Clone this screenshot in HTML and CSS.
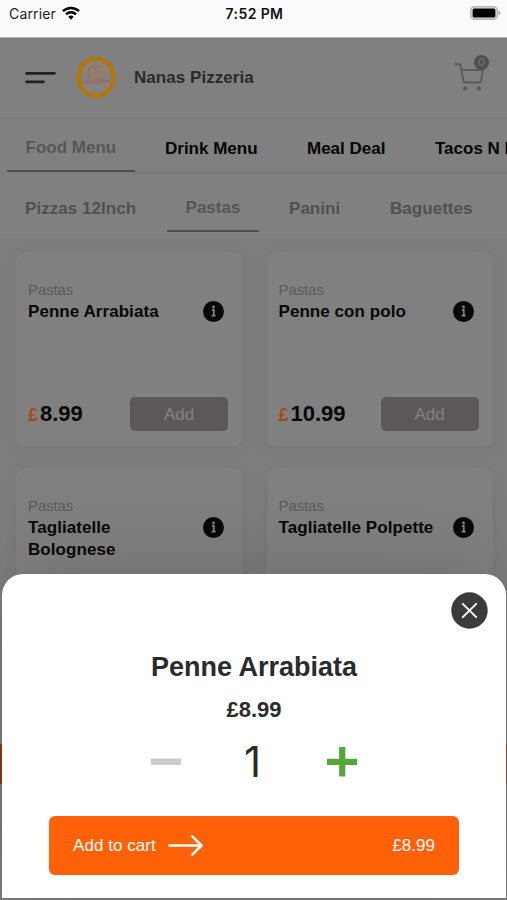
FILE: index.html
```html
<!DOCTYPE html>
<html lang="en">
<head>
<meta charset="utf-8">
<title>Nanas Pizzeria</title>
<link rel="stylesheet" href="styles.css">
</head>
<body>
<div class="phone">
  <div class="status">
    <div class="carrier"><span>Carrier</span>
      <svg width="18" height="14" viewBox="0 0 18 14" fill="none" stroke="#000" stroke-width="2.5"><path d="M1 5.2a11.4 11.4 0 0 1 16 0M4 8.3a7 7 0 0 1 10 0"/><path d="M9 13.7 6.3 10.8a3.8 3.8 0 0 1 5.4 0Z" fill="#000" stroke="none"/></svg>
    </div>
    <div class="time">7:52 PM</div>
    <svg class="battery" width="31" height="14" viewBox="0 0 31 14"><rect x=".8" y=".8" width="26.4" height="12.4" rx="3.5" fill="#e2e2e0" stroke="#b5b5b2" stroke-width="1.4"/><rect x="2.6" y="2.4" width="22.8" height="9.2" rx="1.5" fill="#000"/><path d="M28.5 4.5c2.6 1 2.6 4 0 5Z" fill="#aaa"/></svg>
  </div>
  <header class="header">
    <svg class="burger" width="31" height="14" viewBox="0 0 31 14" stroke="#1d212c" stroke-width="2.7" stroke-linecap="round"><path d="M1.5 2.3h28M1.5 10.8h17"/></svg>
    <svg class="logo" width="40" height="43" viewBox="0 0 40 43"><ellipse cx="20" cy="20.5" rx="17.4" ry="18.6" fill="#858382" stroke="#b17508" stroke-width="4.4"/><path d="M11 20c-2-6 2-12 7-12 2 0 2 1 4 0 5-1 8 6 7 12l-3 3H13Z" fill="#93786d"/><path d="M14 12c3-4 4 3 3 8M23 10c5 2 3 7 2 11M19 14l4 3-5 3" fill="none" stroke="#9c8073" stroke-width="1.5"/><path d="M6.5 23h27v3c-3 0-5 1-7 0-3 1-8 2-13 0-2 1-5 0-7 0Z" fill="#8b7169"/><path d="M8 24.5h24" stroke="#937a72" stroke-dasharray="2 1"/></svg>
    <h1 class="brand">Nanas Pizzeria</h1>
    <div class="cart">
      <svg width="31" height="30" viewBox="0 0 31 30" fill="none" stroke="#5b5b5b" stroke-width="2" stroke-linecap="round" stroke-linejoin="round"><path d="M1.2 3.2h5.1l3.1 16.6q.3 1.7 1.8 1.7h14q1.5 0 1.8-1.7l2-10.8H7.6"/><circle cx="11.2" cy="27.6" r="2.2" fill="#5b5b5b" stroke="none"/><circle cx="24.7" cy="27.6" r="2.2" fill="#5b5b5b" stroke="none"/></svg>
      <span class="badge">0</span>
    </div>
  </header>
  <nav class="tabs">
    <span class="tab active">Food Menu</span><span class="tab drinks">Drink Menu</span><span class="tab deals">Meal Deal</span><span class="tab">Tacos N Burritos</span>
  </nav>
  <nav class="subtabs">
    <span class="sub first">Pizzas 12Inch</span><span class="sub active">Pastas</span><span class="sub panini">Panini</span><span class="sub">Baguettes</span>
  </nav>
  <main class="grid">
    <article class="card">
      <div class="category">Pastas</div>
      <div class="row"><h2>Penne Arrabiata</h2><svg class="info" width="21" height="21" viewBox="0 0 21 21"><circle cx="10.5" cy="10.5" r="10.5" fill="#080808"/><path d="M9 8.9h1.8v5.8M8.6 14.7h4" fill="none" stroke="#858585" stroke-width="1.7"/><circle cx="10.5" cy="6" r="1.4" fill="#858585"/></svg></div>
      <div class="buy"><span class="price"><i>£</i>8.99</span><span class="add">Add</span></div>
    </article>
    <article class="card">
      <div class="category">Pastas</div>
      <div class="row"><h2>Penne con polo</h2><svg class="info" width="21" height="21" viewBox="0 0 21 21"><circle cx="10.5" cy="10.5" r="10.5" fill="#080808"/><path d="M9 8.9h1.8v5.8M8.6 14.7h4" fill="none" stroke="#858585" stroke-width="1.7"/><circle cx="10.5" cy="6" r="1.4" fill="#858585"/></svg></div>
      <div class="buy"><span class="price"><i>£</i>10.99</span><span class="add">Add</span></div>
    </article>
    <article class="card">
      <div class="category">Pastas</div>
      <div class="row"><h2>Tagliatelle<br>Bolognese</h2><svg class="info" width="21" height="21" viewBox="0 0 21 21"><circle cx="10.5" cy="10.5" r="10.5" fill="#080808"/><path d="M9 8.9h1.8v5.8M8.6 14.7h4" fill="none" stroke="#858585" stroke-width="1.7"/><circle cx="10.5" cy="6" r="1.4" fill="#858585"/></svg></div>
    </article>
    <article class="card">
      <div class="category">Pastas</div>
      <div class="row"><h2>Tagliatelle Polpette</h2><svg class="info" width="21" height="21" viewBox="0 0 21 21"><circle cx="10.5" cy="10.5" r="10.5" fill="#080808"/><path d="M9 8.9h1.8v5.8M8.6 14.7h4" fill="none" stroke="#858585" stroke-width="1.7"/><circle cx="10.5" cy="6" r="1.4" fill="#858585"/></svg></div>
    </article>
  </main>
  <div class="checkout"></div>
  <section class="sheet">
    <svg class="close" width="37" height="37" viewBox="0 0 37 37"><circle cx="18.5" cy="18.5" r="18.2" fill="#3b3b3b"/><path d="m11.8 11.8 13.4 13.4m0-13.4L11.8 25.2" stroke="#fff" stroke-width="1.9" stroke-linecap="round"/></svg>
    <h2 class="title">Penne Arrabiata</h2>
    <div class="unit">£8.99</div>
    <div class="stepper">
      <svg width="30" height="30" viewBox="0 0 30 30"><path d="M0 14.7h30" stroke="#cbcbcb" stroke-width="6.4"/></svg>
      <span class="qty">1</span>
      <svg width="30" height="30" viewBox="0 0 30 30"><path d="M0 14.8h30M15.2 0v29.5" stroke="#55a73b" stroke-width="6.2"/></svg>
    </div>
    <div class="addcart">
      <span>Add to cart</span>
      <svg width="35" height="22" viewBox="0 0 35 22" fill="none" stroke="#fff" stroke-width="2.5" stroke-linecap="round" stroke-linejoin="round"><path d="M1.5 10.5h32M24.3 1.3l9.2 9.2-9.2 9.2"/></svg>
      <span class="total">£8.99</span>
    </div>
  </section>
</div>
</body>
</html>
```
FILE: styles.css
```css
* { box-sizing: border-box; }
body { margin: 0; font-family: "Liberation Sans", Arial, sans-serif; }
h1, h2 { margin: 0; }
svg { display: block; flex: none; }
.phone { position: relative; width: 507px; height: 900px; overflow: hidden; background: #7d7d7d; }

.status { height: 38px; background: #fbfbfb; display: grid; grid-template-columns: 1fr auto 1fr; align-items: start; padding: 5px 7px 0 9px; font-family: Inter, sans-serif; font-size: 14px; line-height: 18px; color: #222; border-bottom: 1px solid #b5b5b5; }
.carrier { display: flex; gap: 6px; letter-spacing: .15px; }
.carrier svg { margin-top: 1px; }
.time { font-weight: 600; color: #111; letter-spacing: .4px; }
.battery { justify-self: end; margin: 1px -1px 0 0; }

.header { height: 81px; background: #808080; border-bottom: 1px solid #7a7a7a; display: flex; align-items: center; padding: 0 18px 0 25px; }
.logo { margin-left: 20px; }
.brand { margin-left: 18px; font-size: 17px; letter-spacing: .05px; color: #2a2a2a; }
.cart { position: relative; margin-left: auto; width: 35px; height: 37px; padding-top: 2px; }
.cart svg { margin-top: -1px; }
.badge { position: absolute; right: 0; top: -5px; width: 15px; height: 15px; border-radius: 50%; background: #505050; color: #7b7b7b; font-size: 11px; line-height: 15px; text-align: center; }

.tabs { height: 54px; background: #808080; border-bottom: 1px solid #797979; display: flex; padding-left: 7px; font-weight: bold; font-size: 17px; color: #050505; white-space: nowrap; overflow: hidden; }
.tab { flex: none; padding-top: 20px; line-height: 20px; }
.tab.active { width: 128px; height: 53px; padding: 19px 0 0 18.5px; margin-right: 30px; color: #565656; border-bottom: 2px solid #4e4e4e; }
.drinks { width: 142px; }
.deals { width: 128px; }

.subtabs { height: 65px; display: flex; padding-left: 25px; background: #808080; font-weight: bold; font-size: 17px; letter-spacing: .04px; color: #505050; }
.sub { padding-top: 26px; line-height: 20px; }
.first { width: 142px; }
.sub.active { width: 92px; height: 59px; padding: 25px 0 0 18.5px; margin-right: 30px; color: #565656; border-bottom: 2px solid #505050; }
.panini { width: 101px; }

.grid { display: grid; grid-template-columns: 226px 226px; grid-auto-rows: 195px; gap: 21px 24.5px; padding: 14px 0 0 16px; }
.card { background: #808080; border-radius: 9px; padding: 29px 12px 16px; display: flex; flex-direction: column; box-shadow: 0 3px 16px rgba(0, 0, 0, .05); }
.category { font-size: 15px; letter-spacing: -.1px; line-height: 18px; color: #5b5b5b; }
.row { display: flex; justify-content: space-between; align-items: flex-start; padding: 2px 6px 0 0; }
.row h2 { font-size: 17px; line-height: 22px; letter-spacing: .06px; color: #080808; white-space: nowrap; }
.info { margin-right: .5px; margin-top: -.5px; }
.buy { margin-top: auto; display: flex; justify-content: space-between; align-items: center; }
.price { font-size: 22px; font-weight: bold; color: #080808; }
.price i { font-size: 18px; font-style: normal; color: #a5491b; margin-right: 2px; }
.add { width: 98px; height: 34px; margin-right: 2px; border-radius: 5px; background: #5c5859; color: #828282; text-align: center; line-height: 35px; font-size: 17px; }

.checkout { position: absolute; left: 0; right: 0; top: 744px; height: 40px; background: #863500; }
.sheet { position: absolute; left: 2px; right: 1px; top: 574px; height: 324px; background: #fff; border-radius: 21px 21px 0 0; box-shadow: 0 0 2px #777, 0 0 90px rgba(0, 0, 0, .16); display: flex; flex-direction: column; align-items: center; color: #2b2b2b; }
.close { align-self: flex-end; margin: 18px 18px 0 0; }
.title { margin-top: 22px; font-size: 27px; line-height: 32px; }
.unit { margin-top: 14px; font-size: 22px; line-height: 26px; font-weight: bold; }
.stepper { width: 206px; height: 44px; margin-top: 17px; display: flex; align-items: center; justify-content: space-between; }
.qty { font-family: Inter, sans-serif; font-size: 42px; line-height: 44px; margin-right: 3px; }
.addcart { width: 410px; height: 59px; margin-top: 32px; padding: 0 24px; border-radius: 6px; background: #ff6108; display: flex; align-items: center; color: #fff; font-size: 17px; letter-spacing: .05px; }
.addcart svg { margin-left: 12px; }
.total { margin-left: auto; }
```
